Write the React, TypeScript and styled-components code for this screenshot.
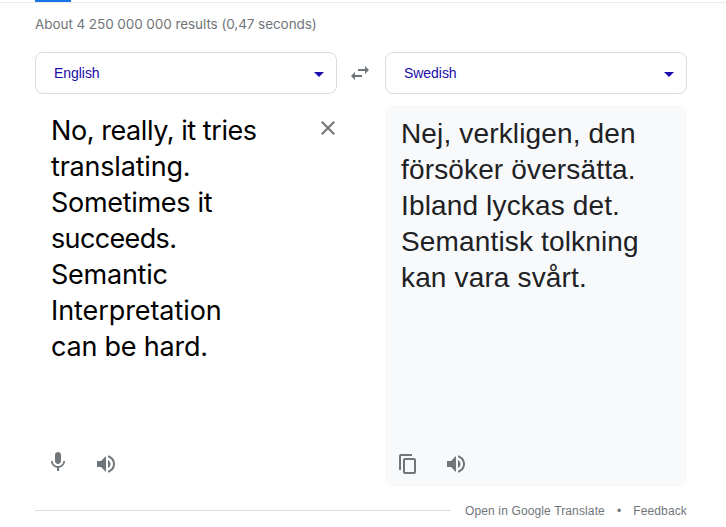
import React from 'react';
import styled, { createGlobalStyle } from 'styled-components';

const GlobalStyle = createGlobalStyle`
  * { box-sizing: border-box; }
  body { margin: 0; background: #fff; font-family: "Liberation Sans", Arial, sans-serif; }
`;

const Page = styled.main`
  width: 726px;
  height: 527px;
  overflow: hidden;
`;

const TabStrip = styled.div`
  height: 3px;
  padding-left: 35px;
  border-bottom: 1px solid #ebebeb;
`;

const ActiveTab = styled.div`
  width: 36px;
  height: 2px;
  background: #1a73e8;
`;

const Content = styled.div`
  width: 652px;
  margin-left: 35px;
`;

const Stats = styled.div`
  height: 49px;
  padding-top: 11px;
  font: 13.5px/20px Inter, sans-serif;
  letter-spacing: -0.07px;
  color: #70757a;
  white-space: nowrap;
`;

const Columns = styled.div`
  display: grid;
  grid-template-columns: 302px 48px 302px;
`;

const Select = styled.button`
  display: flex;
  align-items: center;
  justify-content: space-between;
  height: 42px;
  padding: 0 12px 0 18px;
  border: 1px solid #dadce0;
  border-radius: 8px;
  background: #fff;
  color: #1a0dab;
  font: 14px/20px "Liberation Sans", Arial, sans-serif;
  letter-spacing: -0.05px;
`;

const Caret = styled.span`
  margin-top: 2px;
  border: 5px solid transparent;
  border-top-color: #1a0dab;
  border-bottom: 0;
`;

const SwapButton = styled.div`
  display: flex;
  align-items: center;
  justify-content: center;
  padding-right: 2px;
`;

const Panel = styled.section<{ $tinted?: boolean }>`
  display: flex;
  flex-direction: column;
  justify-content: space-between;
  height: 382px;
  margin-top: 11px;
  padding: ${(p) => (p.$tinted ? '11px 11px 11px 16px' : '8px 0 11px 16px')};
  border-radius: 8px;
  background: ${(p) => (p.$tinted ? '#f8f9fa' : '#fff')};
`;

const PanelTop = styled.div`
  display: flex;
  justify-content: space-between;
`;

const SourceText = styled.div`
  color: #000;
  font: 27px/36px Inter, sans-serif;
  white-space: nowrap;
`;

const Line = styled.div<{ $tracking: number }>`
  letter-spacing: ${(p) => p.$tracking}px;
`;

const TargetText = styled.div`
  color: #202124;
  font: 28px/36px "Liberation Sans", Arial, sans-serif;
  letter-spacing: 0.15px;
  white-space: nowrap;
`;

const ClearButton = styled.div`
  height: 24px;
  margin: 3px -3px 0 0;
`;

const Tools = styled.div<{ $inset: number }>`
  display: flex;
  gap: 24px;
  margin-left: ${(p) => p.$inset}px;
`;

const Icon = styled.svg<{ $size: number; $lift?: number }>`
  display: block;
  flex: none;
  width: ${(p) => p.$size}px;
  height: ${(p) => p.$size}px;
  margin-top: ${(p) => -(p.$lift ?? 0)}px;
  fill: #70757a;
`;

const Footer = styled.footer`
  display: flex;
  align-items: center;
  height: 16px;
  margin-top: 16px;
  color: #70757a;
  font-size: 12px;
  line-height: 16px;
  letter-spacing: 0.13px;
  white-space: nowrap;
`;

const Rule = styled.div`
  flex: 1;
  height: 1px;
  margin: -1px 14px 0 0;
  background: #dadce0;
`;

const Dot = styled.span`
  margin: 0 12px;
`;

const source = [
  { text: 'No, really, it tries', tracking: -0.43 },
  { text: 'translating.', tracking: -0.2 },
  { text: 'Sometimes it', tracking: -0.3 },
  { text: 'succeeds.', tracking: -0.65 },
  { text: 'Semantic', tracking: -0.25 },
  { text: 'Interpretation', tracking: -0.08 },
  { text: 'can be hard.', tracking: -0.22 },
];

const target = ['Nej, verkligen, den', 'försöker översätta.', 'Ibland lyckas det.', 'Semantisk tolkning', 'kan vara svårt.'];

const paths = {
  swap: 'M6.99 11L3 15l3.99 4v-3H14v-2H6.99v-3zM21 9l-3.99-4v3H10v2h7.01v3L21 9z',
  close: 'M19 6.41L17.59 5 12 10.59 6.41 5 5 6.41 10.59 12 5 17.59 6.41 19 12 13.41 17.59 19 19 17.59 13.41 12z',
  mic: 'M12 14c1.66 0 2.99-1.34 2.99-3L15 5c0-1.66-1.34-3-3-3S9 3.34 9 5v6c0 1.66 1.34 3 3 3zm5.3-3c0 3-2.54 5.1-5.3 5.1S6.7 14 6.7 11H5c0 3.41 2.72 6.23 6 6.72V21h2v-3.28c3.28-.48 6-3.3 6-6.72h-1.7z',
  speaker: 'M3 9v6h4l5 5V4L7 9H3zm13.5 3c0-1.77-1.02-3.29-2.5-4.03v8.05c1.48-.73 2.5-2.25 2.5-4.02zM14 3.23v2.06c2.89.86 5 3.54 5 6.71s-2.11 5.85-5 6.71v2.06c4.01-.91 7-4.49 7-8.77s-2.99-7.86-7-8.77z',
  copy: 'M16 2H5c-1.1 0-2 .9-2 2v14h2V4h11V2zm3 4H9c-1.1 0-2 .9-2 2v12c0 1.1.9 2 2 2h9c1.1 0 2-.9 2-2V8c0-1.1-.9-2-2-2zm-1 14H9V8h9v12z',
};

function Glyph({ name, size, lift }: { name: keyof typeof paths; size: number; lift?: number }) {
  return (
    <Icon viewBox="0 0 24 24" $size={size} $lift={lift} aria-hidden="true">
      <path d={paths[name]} />
    </Icon>
  );
}

export default function App() {
  return (
    <Page>
      <GlobalStyle />
      <TabStrip><ActiveTab /></TabStrip>
      <Content>
        <Stats>About 4 250 000 000 results (0,47 seconds)</Stats>
        <Columns>
          <Select>English<Caret /></Select>
          <SwapButton><Glyph name="swap" size={24} /></SwapButton>
          <Select>Swedish<Caret /></Select>
        </Columns>
        <Columns>
          <Panel>
            <PanelTop>
              <SourceText>
                {source.map((l) => <Line key={l.text} $tracking={l.tracking}>{l.text}</Line>)}
              </SourceText>
              <ClearButton><Glyph name="close" size={24} /></ClearButton>
            </PanelTop>
            <Tools $inset={-5}>
              <Glyph name="mic" size={24} lift={2} />
              <Glyph name="speaker" size={24} />
            </Tools>
          </Panel>
          <div />
          <Panel $tinted>
            <TargetText>{target.map((t) => <div key={t}>{t}</div>)}</TargetText>
            <Tools $inset={-5}>
              <Glyph name="copy" size={24} />
              <Glyph name="speaker" size={24} />
            </Tools>
          </Panel>
        </Columns>
        <Footer>
          <Rule />
          <span>Open in Google Translate</span>
          <Dot>•</Dot>
          <span>Feedback</span>
        </Footer>
      </Content>
    </Page>
  );
}
